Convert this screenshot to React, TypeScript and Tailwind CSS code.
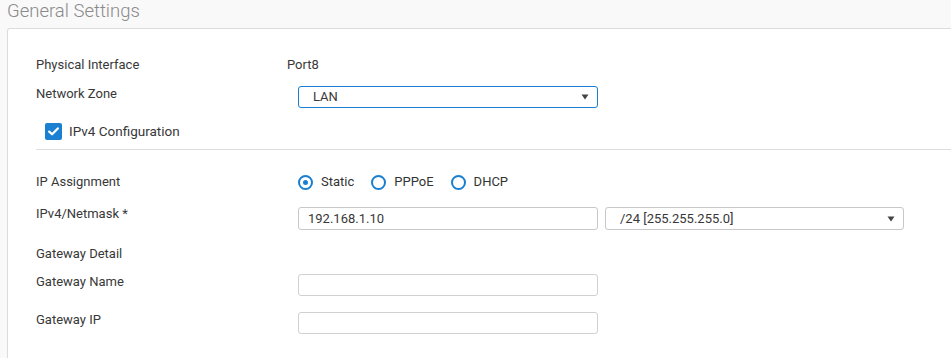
import React from "react";

const font = { fontFamily: "Roboto, 'Liberation Sans', sans-serif" };

function Caret() {
  return (
    <svg width="8" height="6" viewBox="0 0 8 6" className="shrink-0">
      <path d="M0.5 0.5 L7.5 0.5 L4 5.5 Z" fill="#444" />
    </svg>
  );
}

function Radio({ checked, label }: { checked?: boolean; label: string }) {
  return (
    <div className="flex items-center gap-[8px]">
      <div className="w-[15px] h-[15px] rounded-full border-2 border-[#1a7fd0] flex items-center justify-center bg-white">
        {checked && <div className="w-[5px] h-[5px] rounded-full bg-[#1a7fd0]" />}
      </div>
      <span className="text-[13px] text-[#333]">{label}</span>
    </div>
  );
}

export default function App() {
  return (
    <div className="w-[951px] h-[358px] bg-[#f9f9f9] overflow-hidden" style={font}>
      <div className="pl-[7px] h-[28px] flex items-start">
        <h1 className="text-[18.5px] leading-[24px] font-light text-[#8a8a8a] -mt-[1px]">General Settings</h1>
      </div>
      <div className="ml-[7px] bg-white border border-[#dcdcdc] border-r-0 rounded-tl-[3px] h-[340px] pl-[28px] pt-[26px] text-[13px] text-[#383838]">
        <div className="flex items-center h-[20px]">
          <div className="w-[251px]">Physical Interface</div>
          <div>Port8</div>
        </div>
        <div className="flex items-start mt-[11px] h-[22px]">
          <div className="w-[262px] leading-[16px]">Network Zone</div>
          <div className="w-[300px] h-[22px] border border-[#1a7fd0] rounded-[3px] flex items-center justify-between pl-[14px] pr-[8px]">
            <span>LAN</span>
            <Caret />
          </div>
        </div>
        <div className="flex items-center mt-[14px] ml-[9px] h-[18px]">
          <div className="w-[17px] h-[17px] rounded-[2px] bg-[#1b80d1] flex items-center justify-center">
            <svg width="11" height="9" viewBox="0 0 11 9">
              <path d="M1.2 4.6 L4.1 7.3 L9.8 1.4" stroke="white" strokeWidth="2.2" fill="none" strokeLinecap="round" strokeLinejoin="round" />
            </svg>
          </div>
          <span className="ml-[7px] text-[13.5px]">IPv4 Configuration</span>
        </div>
        <div className="border-t border-[#dddddd] mt-[9px]" />
        <div className="flex items-center mt-[23px] h-[18px]">
          <div className="w-[262px]">IP Assignment</div>
          <div className="flex items-center gap-[17px]">
            <Radio checked label="Static" />
            <Radio label="PPPoE" />
            <Radio label="DHCP" />
          </div>
        </div>
        <div className="flex items-start mt-[16px] h-[23px]">
          <div className="w-[262px] leading-[16px] -mt-[1px]">IPv4/Netmask *</div>
          <div className="w-[300px] h-[23px] border border-[#c8c8c8] rounded-[3px] flex items-center pl-[9px]">192.168.1.10</div>
          <div className="ml-[7px] w-[299px] h-[23px] border border-[#c8c8c8] rounded-[3px] flex items-center justify-between pl-[14px] pr-[8px]">
            <span>/24 [255.255.255.0]</span>
            <Caret />
          </div>
        </div>
        <div className="mt-[16px] h-[16px] leading-[16px]">Gateway Detail</div>
        <div className="flex items-start mt-[12px] h-[22px]">
          <div className="w-[262px] leading-[16px]">Gateway Name</div>
          <div className="w-[300px] h-[22px] border border-[#d0d0d0] rounded-[3px]" />
        </div>
        <div className="flex items-start mt-[16px] h-[22px]">
          <div className="w-[262px] leading-[16px]">Gateway IP</div>
          <div className="w-[300px] h-[22px] border border-[#d0d0d0] rounded-[3px]" />
        </div>
      </div>
    </div>
  );
}
